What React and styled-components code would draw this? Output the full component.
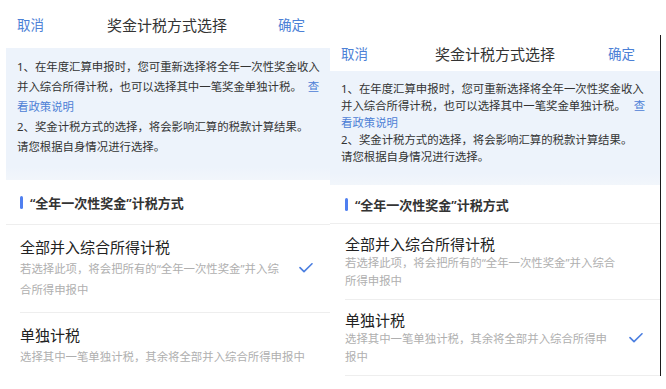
import React from 'react';
import styled, { createGlobalStyle, ThemeProvider } from 'styled-components';

const GlobalStyle = createGlobalStyle`
  html, body {
    margin: 0;
    padding: 0;
    background: #fff;
  }
  body {
    font-family: "Noto Sans", "Noto Sans CJK SC", sans-serif;
    color: #333;
  }
`;

// the two screenshots differ slightly in spacing and wrapping
const leftShot = {
  top: 0,
  left: 6,
  width: 324,
  edge: 'none',
  headerH: 48,
  headerPad: '0 25px 0 11px',
  titleShift: 6,
  notePad: '9px 6px 23px 11px',
  noteLH: 20,
  linkGap: 6,
  sectionH: 44,
  sectionPad: 14,
  optionLeft: 14,
  optionPad: '11px 17px 12px 0',
  titleLH: 22,
  subLH: 21,
  checkGap: 13,
  reserveCheck: false,
  lastDivider: false,
  subs: [
    '若选择此项，将会把所有的“全年一次性奖金”并入综\n合所得申报中',
    '选择其中一笔单独计税，其余将全部并入综合所得申报中',
  ],
};

const rightShot = {
  top: 35,
  left: 0,
  width: 330,
  edge: '1.5px solid #1c1c1c',
  headerH: 36,
  headerPad: '0 25px 0 11px',
  titleShift: 7,
  notePad: '9px 10px 20px 11px',
  noteLH: 17,
  linkGap: 8,
  sectionH: 38,
  sectionPad: 15,
  optionLeft: 15,
  optionPad: '10px 17px 10px 0',
  titleLH: 20,
  subLH: 17.5,
  checkGap: 7,
  reserveCheck: true,
  lastDivider: true,
  subs: [
    '若选择此项，将会把所有的“全年一次性奖金”并入综合\n所得申报中',
    '选择其中一笔单独计税，其余将全部并入综合所得申\n报中',
  ],
};

const titles = ['全部并入综合所得计税', '单独计税'];

const Page = styled.div`
  display: flex;
  align-items: flex-start;
  width: 666px;
  height: 389px;
  overflow: hidden;
  background: #fff;
`;

const Shot = styled.section`
  flex: none;
  width: ${p => p.theme.width}px;
  margin-left: ${p => p.theme.left}px;
  margin-top: ${p => p.theme.top}px;
  border-right: ${p => p.theme.edge};
  background: #fff;
`;

const Header = styled.header`
  display: flex;
  align-items: center;
  justify-content: space-between;
  height: ${p => p.theme.headerH}px;
  padding: ${p => p.theme.headerPad};
`;

const HeaderLink = styled.span`
  font-size: 13.5px;
  color: #4c80d6;
`;

const Title = styled.h1`
  margin: 0 0 0 ${p => p.theme.titleShift * 2}px;
  font-size: 15px;
  font-weight: 400;
  color: #333;
`;

const Notice = styled.div`
  background: linear-gradient(#edf3fb 90%, #f2f6fb);
  padding: ${p => p.theme.notePad};
  font-size: 11.4px;
  line-height: ${p => p.theme.noteLH}px;
  color: #333;
  white-space: nowrap;
  overflow: hidden;
`;

const NoticeLine = styled.p`
  margin: 0;
`;

const PolicyLink = styled.a`
  margin-left: ${p => (p.$first ? p.theme.linkGap : 0)}px;
  color: #4c80d6;
  text-decoration: none;
`;

const SectionHead = styled.div`
  display: flex;
  align-items: center;
  gap: 7px;
  height: ${p => p.theme.sectionH}px;
  padding-left: ${p => p.theme.sectionPad}px;
  border-bottom: 1px solid #eeeeee;
  font-size: 13px;
  font-weight: 600;
  color: #333;
`;

const Bar = styled.span`
  width: 3px;
  height: 13px;
  border-radius: 1.5px;
  background: #4f7ff0;
`;

const Option = styled.div`
  padding-left: ${p => p.theme.optionLeft}px;

  &:last-child > div {
    border-bottom: ${p => (p.theme.lastDivider ? '1px solid #eeeeee' : 'none')};
  }
`;

const OptionRow = styled.div`
  display: flex;
  align-items: center;
  padding: ${p => p.theme.optionPad};
  border-bottom: 1px solid #eeeeee;
`;

const OptionText = styled.div`
  flex: 1;
  min-width: 0;
`;

const OptionTitle = styled.div`
  font-size: 15px;
  line-height: ${p => p.theme.titleLH}px;
  color: #222;
`;

const OptionSub = styled.div`
  font-size: 11.4px;
  line-height: ${p => p.theme.subLH}px;
  color: #afafaf;
  white-space: pre;
`;

const Check = styled.svg`
  flex: none;
  width: 14px;
  height: 10px;
  margin-left: ${p => p.theme.checkGap}px;
  visibility: ${p => (p.$on ? 'visible' : 'hidden')};
`;

const BonusTaxPicker = ({ theme, selected }) => (
  <ThemeProvider theme={theme}>
    <Shot>
      <Header>
        <HeaderLink>取消</HeaderLink>
        <Title>奖金计税方式选择</Title>
        <HeaderLink>确定</HeaderLink>
      </Header>
      <Notice>
        <NoticeLine>1、在年度汇算申报时，您可重新选择将全年一次性奖金收入</NoticeLine>
        <NoticeLine>
          并入综合所得计税，也可以选择其中一笔奖金单独计税。
          <PolicyLink href="#" $first>查</PolicyLink>
        </NoticeLine>
        <NoticeLine>
          <PolicyLink href="#">看政策说明</PolicyLink>
        </NoticeLine>
        <NoticeLine>2、奖金计税方式的选择，将会影响汇算的税款计算结果。</NoticeLine>
        <NoticeLine>请您根据自身情况进行选择。</NoticeLine>
      </Notice>
      <SectionHead>
        <Bar />
        “全年一次性奖金”计税方式
      </SectionHead>
      {titles.map((title, i) => (
        <Option key={title}>
          <OptionRow>
            <OptionText>
              <OptionTitle>{title}</OptionTitle>
              <OptionSub>{theme.subs[i]}</OptionSub>
            </OptionText>
            {(theme.reserveCheck || i === selected) && (
              <Check $on={i === selected} viewBox="0 0 14 10">
                <polyline points="1,4.6 5,8.6 13,0.8" fill="none" stroke="#4a7ee0" strokeWidth="1.6" strokeLinecap="round" strokeLinejoin="round" />
              </Check>
            )}
          </OptionRow>
        </Option>
      ))}
    </Shot>
  </ThemeProvider>
);

const App = () => (
  <>
    <GlobalStyle />
    <Page>
      <BonusTaxPicker theme={leftShot} selected={0} />
      <BonusTaxPicker theme={rightShot} selected={1} />
    </Page>
  </>
);

export default App;
